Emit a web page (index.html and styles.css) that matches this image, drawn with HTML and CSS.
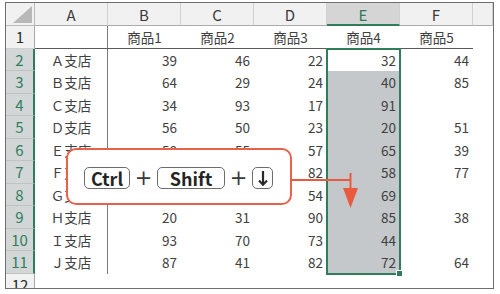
FILE: index.html
```html
<!DOCTYPE html>
<html lang="ja">
<head>
<meta charset="utf-8">
<link rel="stylesheet" href="styles.css">
</head>
<body>
<div class="frame">
  <div class="sheet">
    <div class="corner"><span class="tri"></span></div>
    <div class="ch">A</div><div class="ch">B</div><div class="ch">C</div><div class="ch">D</div><div class="ch sel">E</div><div class="ch">F</div><div class="ch"></div>

    <div class="rh">1</div><div class="c a h1"></div><div class="c t h1">商品1</div><div class="c t h1">商品2</div><div class="c t h1">商品3</div><div class="c t h1">商品4</div><div class="c t h1">商品5</div><div class="c"></div>

    <div class="rh s">2</div><div class="c a">Ａ支店</div><div class="c n">39</div><div class="c n">46</div><div class="c n">22</div><div class="c n">32</div><div class="c n">44</div><div class="c"></div>
    <div class="rh s">3</div><div class="c a">Ｂ支店</div><div class="c n">64</div><div class="c n">29</div><div class="c n">24</div><div class="c n g">40</div><div class="c n">85</div><div class="c"></div>
    <div class="rh s">4</div><div class="c a">Ｃ支店</div><div class="c n">34</div><div class="c n">93</div><div class="c n">17</div><div class="c n g">91</div><div class="c n"></div><div class="c"></div>
    <div class="rh s">5</div><div class="c a">Ｄ支店</div><div class="c n">56</div><div class="c n">50</div><div class="c n">23</div><div class="c n g">20</div><div class="c n">51</div><div class="c"></div>
    <div class="rh s">6</div><div class="c a">Ｅ支店</div><div class="c n">58</div><div class="c n">55</div><div class="c n">57</div><div class="c n g">65</div><div class="c n">39</div><div class="c"></div>
    <div class="rh s">7</div><div class="c a">Ｆ支店</div><div class="c n"></div><div class="c n"></div><div class="c n">82</div><div class="c n g">58</div><div class="c n">77</div><div class="c"></div>
    <div class="rh s">8</div><div class="c a">Ｇ支店</div><div class="c n"></div><div class="c n"></div><div class="c n">54</div><div class="c n g">69</div><div class="c n"></div><div class="c"></div>
    <div class="rh s">9</div><div class="c a">Ｈ支店</div><div class="c n">20</div><div class="c n">31</div><div class="c n">90</div><div class="c n g">85</div><div class="c n">38</div><div class="c"></div>
    <div class="rh s">10</div><div class="c a">Ｉ支店</div><div class="c n">93</div><div class="c n">70</div><div class="c n">73</div><div class="c n g">44</div><div class="c n"></div><div class="c"></div>
    <div class="rh s">11</div><div class="c a">Ｊ支店</div><div class="c n">87</div><div class="c n">41</div><div class="c n">82</div><div class="c n g">72</div><div class="c n">64</div><div class="c"></div>

    <div class="rh">12</div><div class="c"></div><div class="c"></div><div class="c"></div><div class="c"></div><div class="c"></div><div class="c"></div><div class="c"></div>

    <div class="selbox"></div>
  </div>

  <div class="callout">
    <span class="key k-ctrl">Ctrl</span>
    <span class="plus">+</span>
    <span class="key k-shift">Shift</span>
    <span class="plus">+</span>
    <span class="key k-down"><svg width="10" height="16" viewBox="0 0 10 16"><path d="M5 1 V14.5" stroke="#2a2a2a" stroke-width="2.2" fill="none"/><path d="M1 10.5 L5 14.8 L9 10.5" stroke="#2a2a2a" stroke-width="2" fill="none" stroke-linejoin="miter"/></svg></span>
  </div>

  <svg class="connector" width="70" height="44" viewBox="0 0 70 44">
    <path d="M0 12 H58.5" stroke="#ea5a3e" stroke-width="2" fill="none"/>
    <path d="M58.5 5 V22" stroke="#ea5a3e" stroke-width="2" fill="none"/>
    <polygon points="51,20 66,20 58.5,40" fill="#ea5a3e"/>
  </svg>
</div>
</body>
</html>
```

FILE: styles.css
```css
html, body {
  margin: 0;
  padding: 0;
  background: #ffffff;
}

.frame {
  position: relative;
  width: 500px;
  height: 294px;
  padding: 2px 0 0 5px;
  box-sizing: border-box;
  font-family: "Noto Sans CJK JP", "Noto Sans", sans-serif;
}

.sheet {
  position: relative;
  width: 489px;
  height: 287px;
  box-sizing: border-box;
  border: 1px solid #6e6e6e;
  overflow: hidden;
  display: grid;
  grid-template-columns: 29px repeat(6, 73px) 1fr;
  grid-template-rows: 23px repeat(12, 22.5px);
  background: #ffffff;
}

.corner {
  background: #f1f1f1;
  border-right: 1px solid #b9b9b9;
  border-bottom: 1px solid #b9b9b9;
  box-sizing: border-box;
  display: flex;
  justify-content: flex-end;
  align-items: flex-end;
  padding: 0 2px 2px 0;
}

.tri {
  width: 19px;
  height: 17px;
  background: #b8b8b8;
  clip-path: polygon(100% 0, 100% 100%, 0 100%);
}

.ch {
  background: #f1f1f1;
  border-right: 1px solid #d0d0d0;
  border-bottom: 1px solid #ababab;
  box-sizing: border-box;
  display: flex;
  align-items: center;
  justify-content: center;
  font-size: 15px;
  color: #3a3a3a;
  padding-top: 1px;
}

.ch.sel {
  background: #d5d5d5;
  color: #2c7a56;
  border-bottom: 2px solid #2f7d5a;
}

.rh {
  background: #f1f1f1;
  border-right: 1px solid #ababab;
  border-bottom: 1px solid #cfcfcf;
  box-sizing: border-box;
  display: flex;
  align-items: center;
  justify-content: center;
  font-size: 15px;
  color: #2a2a2a;
}

.rh.s {
  background: #d3d6d7;
  color: #2f7f5c;
  border-right: 2px solid #2f7d5a;
  border-bottom-color: #bfc3c4;
}

.c {
  box-sizing: border-box;
  display: flex;
  align-items: center;
  padding: 0 4px;
  font-size: 13.5px;
  color: #404040;
  white-space: nowrap;
}

.c.a {
  justify-content: center;
  border-right: 1px solid #7a7a7a;
}

.c.t {
  justify-content: center;
}

.c.h1 {
  border-bottom: 1px solid #5a5a5a;
}

.c.n {
  justify-content: flex-end;
}

.c.g {
  background: #c4c8cb;
}

.selbox {
  position: absolute;
  grid-column: 6 / 7;
  grid-row: 3 / 13;
  top: -1px;
  left: -1px;
  right: -1px;
  bottom: -1px;
  border: 2px solid #2f7d5a;
  pointer-events: none;
}

.selbox::after {
  content: "";
  position: absolute;
  right: -4px;
  bottom: -4px;
  width: 5px;
  height: 5px;
  background: #2f7d5a;
  border: 1px solid #ffffff;
}

.callout {
  position: absolute;
  left: 66px;
  top: 148px;
  width: 226px;
  height: 57px;
  box-sizing: border-box;
  border: 2px solid #e8624b;
  border-radius: 10px;
  background: #ffffff;
  display: flex;
  align-items: center;
  padding: 3px 0 0 16px;
}

.key {
  height: 22px;
  box-sizing: border-box;
  border: 1.5px solid #6c6c6c;
  border-radius: 5px;
  background: #ffffff;
  display: flex;
  align-items: center;
  justify-content: center;
  font-size: 18px;
  font-weight: 700;
  color: #242424;
  line-height: 1;
}

.k-ctrl { width: 46px; }
.k-shift { width: 68px; }
.k-down { width: 21px; }

.plus {
  width: 27px;
  height: 22px;
  display: flex;
  align-items: center;
  justify-content: center;
  font-family: "DejaVu Sans", sans-serif;
  font-size: 21px;
  font-weight: 400;
  color: #3a3a3a;
  line-height: 22px;
}

.connector {
  position: absolute;
  left: 292px;
  top: 168px;
}
```
